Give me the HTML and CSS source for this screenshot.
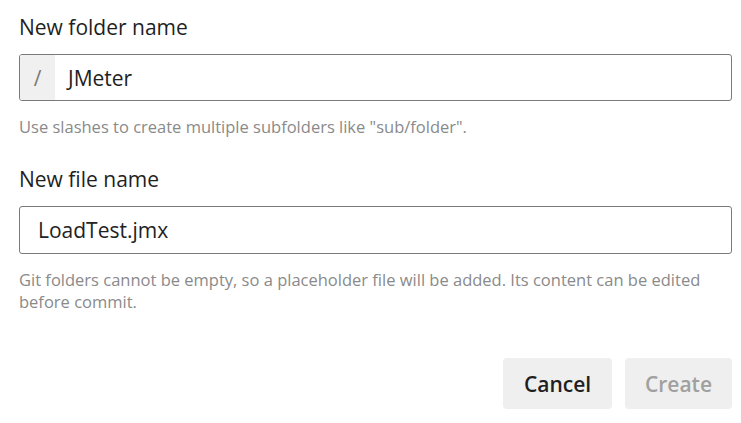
FILE: index.html
```html
<!DOCTYPE html>
<html>
<head>
<meta charset="utf-8">
<link rel="stylesheet" href="styles.css">
</head>
<body>
<div class="dialog">
  <div class="field">
    <div class="label">New folder name</div>
    <div class="input">
      <span class="prefix">/</span>
      <span class="value">JMeter</span>
    </div>
    <div class="help">Use slashes to create multiple subfolders like "sub/folder".</div>
  </div>
  <div class="field second">
    <div class="label">New file name</div>
    <div class="input">
      <span class="value plain">LoadTest.jmx</span>
    </div>
    <div class="help">Git folders cannot be empty, so a placeholder file will be added. Its content can be edited before commit.</div>
  </div>
  <div class="actions">
    <button class="btn cancel">Cancel</button>
    <button class="btn create">Create</button>
  </div>
</div>
</body>
</html>
```
FILE: styles.css
```css
html, body {
  margin: 0;
  padding: 0;
  background: #ffffff;
}
body {
  font-family: "Open Sans", "Noto Sans", "Liberation Sans", sans-serif;
  color: #201f1e;
}
.dialog {
  padding: 12px 9px 0 19px;
  display: flex;
  flex-direction: column;
}
.label {
  font-size: 21px;
  line-height: 30px;
  color: #1f1f1f;
  margin-bottom: 12px;
}
.input {
  height: 45px;
  border: 1px solid #7a7a7a;
  border-radius: 3px;
  display: flex;
  align-items: stretch;
  overflow: hidden;
}
.prefix {
  width: 35px;
  background: #f0f0f0;
  color: #7a7a7a;
  font-size: 21px;
  display: flex;
  align-items: center;
  justify-content: center;
}
.value {
  font-size: 21px;
  color: #222;
  display: flex;
  align-items: center;
  padding-left: 13px;
}
.value.plain {
  padding-left: 18px;
}
.help {
  margin-top: 15px;
  font-size: 16.5px;
  line-height: 22px;
  color: #8a8a8a;
}
.second {
  margin-top: 26px;
}
.second .input {
  height: 46px;
}
.actions {
  display: flex;
  justify-content: flex-end;
  gap: 13px;
  margin-top: 45px;
}
.btn {
  height: 51px;
  border: none;
  border-radius: 4px;
  background: #efefef;
  font-family: "Open Sans", "Noto Sans", sans-serif;
  font-size: 21px;
  font-weight: 600;
  padding: 0;
}
.cancel {
  width: 109px;
  color: #1f1f1f;
}
.create {
  width: 107px;
  color: #a0a0a0;
}
```
